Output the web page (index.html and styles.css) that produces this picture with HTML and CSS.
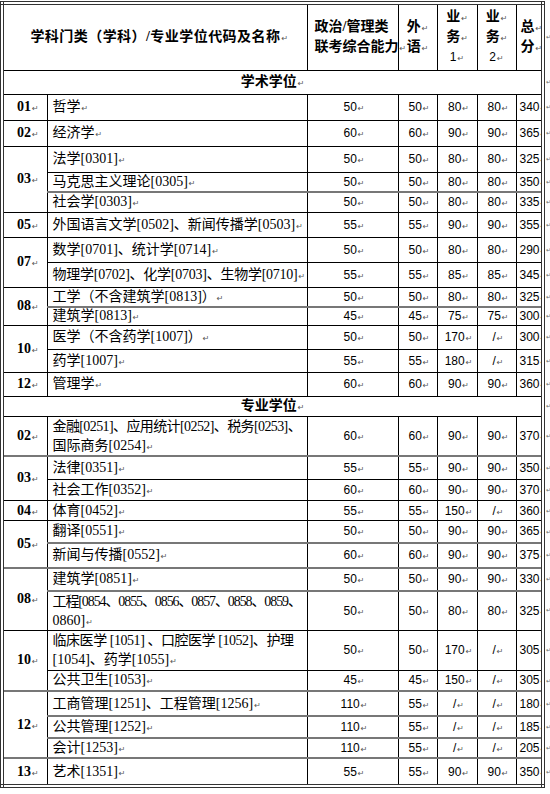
FILE: index.html
```html
<!DOCTYPE html>
<html lang="zh">
<head>
<meta charset="utf-8">
<title>分数线</title>
<link rel="stylesheet" href="styles.css">
</head>
<body>
<table class="t">
<colgroup>
<col class="c1"><col class="c2"><col class="c3"><col class="c4"><col class="c5"><col class="c6"><col class="c7"><col class="c8">
</colgroup>
<tr class="hd">
<th colspan="2" class="h1 first top">学科门类（学科）/专业学位代码及名称<i class="m">↵</i></th>
<th class="top h3">政治/管理类<br>联考综合能力<i class="m">↵</i></th>
<th class="top">外<i class="m">↵</i><br>语<i class="m">↵</i></th>
<th class="top">业<i class="m">↵</i><br>务<i class="m">↵</i><br><span class="hn">1</span><i class="m">↵</i></th>
<th class="top">业<i class="m">↵</i><br>务<i class="m">↵</i><br><span class="hn">2</span><i class="m">↵</i></th>
<th class="top last hl">总<i class="m">↵</i><br>分<i class="m">↵</i></th>
<td class="o">↵</td>
</tr>
<tr class="h24"><td colspan="7" class="sec first last">学术学位<i class="m">↵</i></td><td class="o">↵</td></tr>

<tr class="h26"><td class="cd first">01<i class="m">↵</i></td><td class="nm">哲学<i class="m">↵</i></td><td class="n">50<i class="m">↵</i></td><td class="n">50<i class="m">↵</i></td><td class="n">80<i class="m">↵</i></td><td class="n">80<i class="m">↵</i></td><td class="n tt last">340<i class="m">↵</i></td><td class="o">↵</td></tr>
<tr class="h26"><td class="cd first">02<i class="m">↵</i></td><td class="nm">经济学<i class="m">↵</i></td><td class="n">60<i class="m">↵</i></td><td class="n">60<i class="m">↵</i></td><td class="n">90<i class="m">↵</i></td><td class="n">90<i class="m">↵</i></td><td class="n tt last">365<i class="m">↵</i></td><td class="o">↵</td></tr>
<tr class="h26"><td class="cd first" rowspan="3">03<i class="m">↵</i></td><td class="nm">法学[0301]<i class="m">↵</i></td><td class="n">50<i class="m">↵</i></td><td class="n">50<i class="m">↵</i></td><td class="n">80<i class="m">↵</i></td><td class="n">80<i class="m">↵</i></td><td class="n tt last">325<i class="m">↵</i></td><td class="o">↵</td></tr>
<tr class="h20"><td class="nm">马克思主义理论[0305]<i class="m">↵</i></td><td class="n">50<i class="m">↵</i></td><td class="n">50<i class="m">↵</i></td><td class="n">80<i class="m">↵</i></td><td class="n">80<i class="m">↵</i></td><td class="n tt last">350<i class="m">↵</i></td><td class="o">↵</td></tr>
<tr class="h20 gt"><td class="nm">社会学[0303]<i class="m">↵</i></td><td class="n">50<i class="m">↵</i></td><td class="n">50<i class="m">↵</i></td><td class="n">80<i class="m">↵</i></td><td class="n">80<i class="m">↵</i></td><td class="n tt last">335<i class="m">↵</i></td><td class="o">↵</td></tr>
<tr class="h25"><td class="cd first">05<i class="m">↵</i></td><td class="nm">外国语言文学[0502]、新闻传播学[0503]<i class="m">↵</i></td><td class="n">55<i class="m">↵</i></td><td class="n">55<i class="m">↵</i></td><td class="n">90<i class="m">↵</i></td><td class="n">90<i class="m">↵</i></td><td class="n tt last">355<i class="m">↵</i></td><td class="o">↵</td></tr>
<tr class="h25"><td class="cd first" rowspan="2">07<i class="m">↵</i></td><td class="nm">数学[0701]、统计学[0714]<i class="m">↵</i></td><td class="n">50<i class="m">↵</i></td><td class="n">50<i class="m">↵</i></td><td class="n">80<i class="m">↵</i></td><td class="n">80<i class="m">↵</i></td><td class="n tt last">290<i class="m">↵</i></td><td class="o">↵</td></tr>
<tr class="h25"><td class="nm sq1">物理学[0702]、化学[0703]、生物学[0710]<i class="m">↵</i></td><td class="n">55<i class="m">↵</i></td><td class="n">55<i class="m">↵</i></td><td class="n">85<i class="m">↵</i></td><td class="n">85<i class="m">↵</i></td><td class="n tt last">345<i class="m">↵</i></td><td class="o">↵</td></tr>
<tr class="h20"><td class="cd first" rowspan="2">08<i class="m">↵</i></td><td class="nm">工学（不含建筑学[0813]）<i class="m">↵</i></td><td class="n">50<i class="m">↵</i></td><td class="n">50<i class="m">↵</i></td><td class="n">80<i class="m">↵</i></td><td class="n">80<i class="m">↵</i></td><td class="n tt last">325<i class="m">↵</i></td><td class="o">↵</td></tr>
<tr class="h18 gt"><td class="nm">建筑学[0813]<i class="m">↵</i></td><td class="n">45<i class="m">↵</i></td><td class="n">45<i class="m">↵</i></td><td class="n">75<i class="m">↵</i></td><td class="n">75<i class="m">↵</i></td><td class="n tt last">300<i class="m">↵</i></td><td class="o">↵</td></tr>
<tr class="h24"><td class="cd first" rowspan="2">10<i class="m">↵</i></td><td class="nm">医学（不含药学[1007]）<i class="m">↵</i></td><td class="n">50<i class="m">↵</i></td><td class="n">50<i class="m">↵</i></td><td class="n">170<i class="m">↵</i></td><td class="n">/<i class="m">↵</i></td><td class="n tt last">300<i class="m">↵</i></td><td class="o">↵</td></tr>
<tr class="h23"><td class="nm">药学[1007]<i class="m">↵</i></td><td class="n">55<i class="m">↵</i></td><td class="n">55<i class="m">↵</i></td><td class="n">180<i class="m">↵</i></td><td class="n">/<i class="m">↵</i></td><td class="n tt last">315<i class="m">↵</i></td><td class="o">↵</td></tr>
<tr class="h24"><td class="cd first">12<i class="m">↵</i></td><td class="nm">管理学<i class="m">↵</i></td><td class="n">60<i class="m">↵</i></td><td class="n">60<i class="m">↵</i></td><td class="n">90<i class="m">↵</i></td><td class="n">90<i class="m">↵</i></td><td class="n tt last">360<i class="m">↵</i></td><td class="o">↵</td></tr>

<tr class="h20"><td colspan="7" class="sec first last">专业学位<i class="m">↵</i></td><td class="o">↵</td></tr>

<tr class="h37"><td class="cd first">02<i class="m">↵</i></td><td class="nm tl"><span class="sq2">金融[0251]、应用统计[0252]、税务[0253]、</span><br>国际商务[0254]<i class="m">↵</i></td><td class="n">60<i class="m">↵</i></td><td class="n">60<i class="m">↵</i></td><td class="n">90<i class="m">↵</i></td><td class="n">90<i class="m">↵</i></td><td class="n tt last">370<i class="m">↵</i></td><td class="o">↵</td></tr>
<tr class="h24 gt"><td class="cd first" rowspan="2">03<i class="m">↵</i></td><td class="nm">法律[0351]<i class="m">↵</i></td><td class="n">55<i class="m">↵</i></td><td class="n">55<i class="m">↵</i></td><td class="n">90<i class="m">↵</i></td><td class="n">90<i class="m">↵</i></td><td class="n tt last">350<i class="m">↵</i></td><td class="o">↵</td></tr>
<tr class="h21"><td class="nm">社会工作[0352]<i class="m">↵</i></td><td class="n">60<i class="m">↵</i></td><td class="n">60<i class="m">↵</i></td><td class="n">90<i class="m">↵</i></td><td class="n">90<i class="m">↵</i></td><td class="n tt last">370<i class="m">↵</i></td><td class="o">↵</td></tr>
<tr class="h20"><td class="cd first">04<i class="m">↵</i></td><td class="nm">体育[0452]<i class="m">↵</i></td><td class="n">55<i class="m">↵</i></td><td class="n">55<i class="m">↵</i></td><td class="n">150<i class="m">↵</i></td><td class="n">/<i class="m">↵</i></td><td class="n tt last">360<i class="m">↵</i></td><td class="o">↵</td></tr>
<tr class="h22"><td class="cd first" rowspan="2">05<i class="m">↵</i></td><td class="nm">翻译[0551]<i class="m">↵</i></td><td class="n">50<i class="m">↵</i></td><td class="n">50<i class="m">↵</i></td><td class="n">90<i class="m">↵</i></td><td class="n">90<i class="m">↵</i></td><td class="n tt last">365<i class="m">↵</i></td><td class="o">↵</td></tr>
<tr class="h25 gt"><td class="nm">新闻与传播[0552]<i class="m">↵</i></td><td class="n">60<i class="m">↵</i></td><td class="n">60<i class="m">↵</i></td><td class="n">90<i class="m">↵</i></td><td class="n">90<i class="m">↵</i></td><td class="n tt last">375<i class="m">↵</i></td><td class="o">↵</td></tr>
<tr class="h23 gt"><td class="cd first" rowspan="2">08<i class="m">↵</i></td><td class="nm">建筑学[0851]<i class="m">↵</i></td><td class="n">50<i class="m">↵</i></td><td class="n">50<i class="m">↵</i></td><td class="n">90<i class="m">↵</i></td><td class="n">90<i class="m">↵</i></td><td class="n tt last">330<i class="m">↵</i></td><td class="o">↵</td></tr>
<tr class="h39 gt"><td class="nm tl"><span class="sq3">工程[0854、0855、0856、0857、0858、0859、</span><br>0860]<i class="m">↵</i></td><td class="n">50<i class="m">↵</i></td><td class="n">50<i class="m">↵</i></td><td class="n">80<i class="m">↵</i></td><td class="n">80<i class="m">↵</i></td><td class="n tt last">325<i class="m">↵</i></td><td class="o">↵</td></tr>
<tr class="h40"><td class="cd first" rowspan="2">10<i class="m">↵</i></td><td class="nm tl"><span class="sq4">临床医学 [1051] 、口腔医学 [1052]、护理</span><br>[1054]、药学[1055]<i class="m">↵</i></td><td class="n">50<i class="m">↵</i></td><td class="n">50<i class="m">↵</i></td><td class="n">170<i class="m">↵</i></td><td class="n">/<i class="m">↵</i></td><td class="n tt last">305<i class="m">↵</i></td><td class="o">↵</td></tr>
<tr class="h21"><td class="nm">公共卫生[1053]<i class="m">↵</i></td><td class="n">45<i class="m">↵</i></td><td class="n">45<i class="m">↵</i></td><td class="n">150<i class="m">↵</i></td><td class="n">/<i class="m">↵</i></td><td class="n tt last">305<i class="m">↵</i></td><td class="o">↵</td></tr>
<tr class="h25 gt"><td class="cd first" rowspan="3">12<i class="m">↵</i></td><td class="nm">工商管理[1251]、工程管理[1256]<i class="m">↵</i></td><td class="n">110<i class="m">↵</i></td><td class="n">55<i class="m">↵</i></td><td class="n">/<i class="m">↵</i></td><td class="n">/<i class="m">↵</i></td><td class="n tt last">180<i class="m">↵</i></td><td class="o">↵</td></tr>
<tr class="h22 gt"><td class="nm">公共管理[1252]<i class="m">↵</i></td><td class="n">110<i class="m">↵</i></td><td class="n">55<i class="m">↵</i></td><td class="n">/<i class="m">↵</i></td><td class="n">/<i class="m">↵</i></td><td class="n tt last">185<i class="m">↵</i></td><td class="o">↵</td></tr>
<tr class="h20 gt"><td class="nm">会计[1253]<i class="m">↵</i></td><td class="n">110<i class="m">↵</i></td><td class="n">55<i class="m">↵</i></td><td class="n">/<i class="m">↵</i></td><td class="n">/<i class="m">↵</i></td><td class="n tt last">205<i class="m">↵</i></td><td class="o">↵</td></tr>
<tr class="h28 gt"><td class="cd first bot">13<i class="m">↵</i></td><td class="nm bot">艺术[1351]<i class="m">↵</i></td><td class="n bot">55<i class="m">↵</i></td><td class="n bot">55<i class="m">↵</i></td><td class="n bot">90<i class="m">↵</i></td><td class="n bot">90<i class="m">↵</i></td><td class="n tt last bot">350<i class="m">↵</i></td><td class="o">↵</td></tr>
</table>
</body>
</html>
```
FILE: styles.css
```css
html, body {
  margin: 0;
  padding: 0;
  background: #fff;
}
body {
  padding-top: 1px;
  font-family: "Liberation Serif", "Noto Sans CJK SC", serif;
  font-size: 14px;
  color: #000;
}
.t {
  border-collapse: collapse;
  table-layout: fixed;
  width: 550px;
}
.c1 { width: 45px; }
.c2 { width: 260px; }
.c3 { width: 91px; }
.c4 { width: 39px; }
.c5 { width: 40px; }
.c6 { width: 39px; }
.c7 { width: 27px; }
.c8 { width: 9px; }

th, td {
  border: 1px solid #000;
  padding: 0;
  white-space: nowrap;
  vertical-align: middle;
  line-height: 16px;
}
td { overflow: hidden; }
th {
  font-weight: bold;
  text-align: center;
  line-height: 20px;
}
.first { border-left: 4px double #333; }
.last { border-right: 4px double #333; }
.top { border-top: 4px double #333; }
.bot { border-bottom: 4px double #333; }

.hd { height: 67px; }
.h1 { letter-spacing: 0.45px; padding-left: 8px; }
.h1 .m { letter-spacing: 0; }
.h3 { text-align: left; padding-left: 7px; }
.hl { text-align: left; padding-left: 4px; }
.hn { font-family: "Liberation Sans", sans-serif; font-weight: normal; font-size: 12px; }

.sec {
  text-align: center;
  font-weight: bold;
}
.cd {
  text-align: center;
  font-weight: bold;
  padding-left: 5px;
}
.nm {
  text-align: left;
  padding-left: 5px;
}
.tl { line-height: 19px; }
.sq1 { letter-spacing: -0.25px; }
.sq2 { letter-spacing: -0.6px; }
.sq3 { letter-spacing: -1.1px; }
.sq4 { letter-spacing: -0.45px; }
.n {
  text-align: center;
  font-family: "Liberation Sans", sans-serif;
  font-size: 12px;
  padding-left: 3px;
}
.tt { text-align: left; padding-left: 3px; }

.o {
  border: none;
  font-family: "DejaVu Sans", sans-serif;
  font-size: 6px;
  line-height: 1;
  color: #666;
  text-align: left;
  padding-left: 1px;
}
.m {
  font-style: normal;
  font-family: "DejaVu Sans", sans-serif;
  font-size: 8px;
  line-height: 1;
  font-weight: normal;
  color: #555;
  margin-left: 1px;
  letter-spacing: 0;
}
.gt > td { border-top: 2px solid #777; }
.gt > td.o { border-top: none; }

.h18 { height: 18px; }
.h20 { height: 20px; }
.h21 { height: 21px; }
.h22 { height: 22px; }
.h23 { height: 23px; }
.h24 { height: 24px; }
.h25 { height: 25px; }
.h26 { height: 26px; }
.h28 { height: 28px; }
.h37 { height: 37px; }
.h39 { height: 39px; }
.h40 { height: 40px; }
```
